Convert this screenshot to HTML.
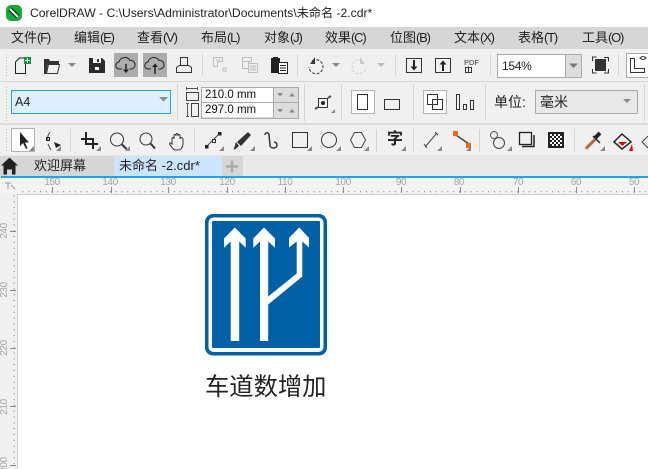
<!DOCTYPE html>
<html lang="zh"><head><meta charset="utf-8"><style>
html,body{margin:0;padding:0;background:#fff}
#p{position:relative;width:648px;height:469px;overflow:hidden;background:#f0f0f0;font-family:"Liberation Sans","Noto Sans CJK SC",sans-serif;color:#111}
.a{position:absolute;white-space:nowrap}
.m{top:28px;font-size:13px;line-height:20px;color:#222}
.m span{letter-spacing:-1.200px}
.r{top:177px;width:30px;text-align:center;font-size:10px;line-height:12px;letter-spacing:-.4px;color:#a5a5a5}
.v{left:-10px;width:30px;text-align:center;font-size:10px;line-height:12px;letter-spacing:-.4px;color:#a5a5a5;transform:rotate(-90deg)}
svg{position:absolute;left:0;top:0}
</style></head><body><div id="p">
<div class="a" style="left:0;top:0;width:648px;height:27px;background:#fff"></div>
<div class="a" style="left:0;top:27px;width:648px;height:22px;background:#d6d6d6"></div>
<div class="a" style="left:0;top:81px;width:648px;height:1px;background:#d6d6d6"></div>
<div class="a" style="left:0;top:123px;width:648px;height:2px;background:#dcdcdc"></div>
<div class="a" style="left:0;top:155px;width:648px;height:22px;background:#e8e8e8"></div>
<div class="a" style="left:0;top:156px;width:114px;height:20px;background:#d6d6d6"></div>
<div class="a" style="left:114px;top:156px;width:108px;height:20px;background:#cce4ff"></div>
<div class="a" style="left:222px;top:156px;width:21px;height:20px;background:#d6d6d6"></div>
<div class="a" style="left:1px;top:176px;width:647px;height:2px;background:#1ea4ee"></div>
<div class="a" style="left:0;top:178px;width:648px;height:16px;background:#f3f3f3"></div>
<div class="a" style="left:18px;top:195px;width:630px;height:274px;background:#fff"></div>
<div class="a" style="left:17px;top:194px;width:631px;height:1px;background:#cfcfcf"></div>
<div class="a" style="left:17px;top:194px;width:1px;height:275px;background:#cfcfcf"></div>

<div class="a" style="left:30px;top:5px;font-size:12.150px;line-height:17px;color:#222">CorelDRAW - C:\Users\Administrator\Documents\未命名 -2.cdr*</div>
<div class="a m" style="left:11px">文件<span>(F)</span></div><div class="a m" style="left:74px">编辑<span>(E)</span></div><div class="a m" style="left:137px">查看<span>(V)</span></div><div class="a m" style="left:201px">布局<span>(L)</span></div><div class="a m" style="left:264px">对象<span>(J)</span></div><div class="a m" style="left:325px">效果<span>(C)</span></div><div class="a m" style="left:390px">位图<span>(B)</span></div><div class="a m" style="left:454px">文本<span>(X)</span></div><div class="a m" style="left:518px">表格<span>(T)</span></div><div class="a m" style="left:582px">工具<span>(O)</span></div>

<div class="a" style="left:497px;top:54px;width:67px;height:22px;background:#fff;border:1px solid #aaa;font-size:12px;line-height:22px;text-indent:4px;letter-spacing:-.3px;color:#222">154%</div>
<div class="a" style="left:565px;top:54px;width:17px;height:24px;background:#ddd;border:1px solid #aaa;box-sizing:border-box"></div>

<div class="a" style="left:11px;top:90px;width:158px;height:22px;background:#ddeeff;border:1px solid #1ea4ee;font-size:12.500px;line-height:22px;text-indent:3px;color:#222">A4</div>
<div class="a" style="left:201px;top:87px;width:96px;height:30px;background:#ddd;border:1px solid #aaa"></div>
<div class="a" style="left:202px;top:88px;width:71px;height:14px;background:#fff;font-size:11.500px;line-height:15px;text-indent:3px;color:#111">210.0 mm</div>
<div class="a" style="left:202px;top:103px;width:71px;height:14px;background:#fff;font-size:11.500px;line-height:15px;text-indent:3px;color:#111">297.0 mm</div>
<div class="a" style="left:201px;top:102px;width:97px;height:1px;background:#aaa"></div>
<div class="a" style="left:273px;top:87px;width:1px;height:31px;background:#aaa"></div>
<div class="a" style="left:351px;top:90px;width:22px;height:22px;background:#fff;border:1px solid #b4b4b4"></div>
<div class="a" style="left:423px;top:90px;width:22px;height:22px;background:#fff;border:1px solid #b4b4b4"></div>
<div class="a" style="left:494px;top:92px;font-size:14px;line-height:20px;color:#222">单位:</div>
<div class="a" style="left:535px;top:90px;width:101px;height:22px;background:#e8e8e8;border:1px solid #aaa;font-size:14px;line-height:22px;text-indent:4px;color:#222">毫米</div>
<div class="a" style="left:11px;top:128px;width:22px;height:22px;background:#fff;border:1px solid #b4b4b4"></div>
<div class="a" style="left:387px;top:130px;font-size:16px;font-weight:700;line-height:20px;color:#222">字</div>

<div class="a" style="left:34px;top:156px;font-size:13px;line-height:20px;color:#222">欢迎屏幕</div>
<div class="a" style="left:119px;top:156px;font-size:13px;line-height:20px;color:#222">未命名 -2.cdr*</div>

<div class="a r" style="left:37px">150</div><div class="a r" style="left:95px">140</div><div class="a r" style="left:153px">130</div><div class="a r" style="left:212px">120</div><div class="a r" style="left:270px">110</div><div class="a r" style="left:328px">100</div><div class="a r" style="left:386px">90</div><div class="a r" style="left:444px">80</div><div class="a r" style="left:503px">70</div><div class="a r" style="left:561px">60</div><div class="a r" style="left:619px">50</div>
<div class="a v" style="top:225px">240</div><div class="a v" style="top:284px">230</div><div class="a v" style="top:342px">220</div><div class="a v" style="top:401px">210</div><div class="a v" style="top:459px">200</div>

<svg width="648" height="469" viewBox="0 0 648 469" fill="none">
<defs>
<pattern id="dh" width="5.82" height="16" x="5" y="3" patternUnits="userSpaceOnUse"><rect width="1" height="1.300" y="12" fill="#8a8a8a"/></pattern>
<pattern id="dv" width="16" height="5.82" y="3.300" patternUnits="userSpaceOnUse"><rect x="13.600" width="1.300" height="1" fill="#8a8a8a"/></pattern>
<pattern id="gr" width="3" height="3" patternUnits="userSpaceOnUse"><rect width="1" height="1" fill="#bbb"/></pattern>
</defs>
<rect x="18" y="178" width="630" height="16" fill="url(#dh)"/>
<g fill="#8a8a8a"><rect x="52" y="187" width="1" height="6"/><rect x="111" y="187" width="1" height="6"/><rect x="168" y="187" width="1" height="6"/><rect x="227" y="187" width="1" height="6"/><rect x="285" y="187" width="1" height="6"/><rect x="343" y="187" width="1" height="6"/><rect x="401" y="187" width="1" height="6"/><rect x="460" y="187" width="1" height="6"/><rect x="518" y="187" width="1" height="6"/><rect x="576" y="187" width="1" height="6"/><rect x="634" y="187" width="1" height="6"/>
<rect x="10" y="231" width="6" height="1"/><rect x="10" y="290" width="6" height="1"/><rect x="10" y="348" width="6" height="1"/><rect x="10" y="406" width="6" height="1"/><rect x="10" y="465" width="6" height="1"/></g>
<rect x="0" y="195" width="17" height="274" fill="url(#dv)"/>
<rect x="4" y="52" width="4" height="26" fill="url(#gr)"/><rect x="4" y="85" width="4" height="36" fill="url(#gr)"/><rect x="4" y="127" width="4" height="26" fill="url(#gr)"/>

<!-- logo -->
<rect x="6" y="5" width="16" height="16" rx="5" fill="#13a838"/><path d="M10 9l8 8" stroke="#17401f" stroke-width="5"/><path d="M10 9l8 8" stroke="#e8f5e8" stroke-width="2"/>

<!-- separators -->
<g fill="#d4d4d4"><rect x="202" y="54" width="1" height="22"/><rect x="297" y="54" width="1" height="22"/><rect x="395" y="54" width="1" height="22"/><rect x="490" y="54" width="1" height="22"/><rect x="618" y="54" width="1" height="22"/>
<rect x="177" y="84" width="1" height="37"/><rect x="304" y="84" width="1" height="37"/><rect x="341" y="84" width="1" height="37"/><rect x="413" y="84" width="1" height="37"/><rect x="485" y="84" width="1" height="37"/><rect x="644" y="84" width="1" height="37"/>
<rect x="70" y="129" width="1" height="23"/><rect x="194" y="129" width="1" height="23"/><rect x="376" y="129" width="1" height="23"/><rect x="413" y="129" width="1" height="23"/><rect x="479" y="129" width="1" height="23"/><rect x="574" y="129" width="1" height="23"/></g>

<!-- row1 -->
<path d="M15.500 73.500V62l4-4h6v15.500z" stroke="#222"/><rect x="24" y="57" width="7" height="7" fill="#0a9a3c"/><path d="M27.500 58v5M25 60.500h5" stroke="#fff"/>
<path d="M44 74V59h5l1 2h9v3H48l-2 10z" fill="#333"/><path d="M46.500 73.500l2-9h11l-2 9z" stroke="#333"/>
<path d="M68 63h8l-4 4z" fill="#8a8a8a"/>
<path d="M89 58h13l3 3v12H89z" fill="#2a2a2a"/><rect x="93" y="58" width="8" height="5" fill="#fff"/><rect x="97" y="59" width="2" height="3" fill="#2a2a2a"/><rect x="95" y="67" width="4" height="3" fill="#fff"/>
<rect x="114" y="53" width="24" height="24" fill="#acacac"/><rect x="143" y="53" width="24" height="24" fill="#acacac"/>
<path d="M122 69h-2.500a3.500 3.500 0 0 1 -.5-7 6 6 0 0 1 11-1.500 4 4 0 0 1 1.500 8.500h-2" stroke="#222"/><path d="M126 64v7" stroke="#222" stroke-width="1.500"/><path d="M123 69.500h6l-3 3.500z" fill="#222"/>
<path d="M151 69h-2.500a3.500 3.500 0 0 1 -.5-7 6 6 0 0 1 11-1.500 4 4 0 0 1 1.500 8.500h-2" stroke="#222"/><path d="M155 66v8" stroke="#222" stroke-width="1.500"/><path d="M152 67h6l-3-3.500z" fill="#222"/>
<path d="M180.500 65.500V57.500h7v8M176.500 72.500v-5l3-2h9l3 2v5z" stroke="#333"/>
<g stroke="#bdbdbd"><path d="M213.500 57.500h9v4h-5v5h-4zM223 68h3v3h-3zM216 60h4"/><path d="M242.500 57.500h9v4h-9zM242.500 61.500h6v7h-6zM248.500 63.500h9v9h-9zM250 66h6M250 68h6M250 70h6"/></g>
<path d="M271 58h9v15h-9z" fill="#222"/><path d="M273 57h5v2h-5z" fill="#222"/><rect x="278.500" y="62.500" width="9" height="11" fill="#fff" stroke="#222"/><path d="M280 65.500h6M280 68h6M280 70.500h6" stroke="#222"/>
<path d="M312 61a7 7 0 1 1-3 6" stroke="#333" stroke-dasharray="3 1.500"/><path d="M315 57v7h-5z" fill="#333"/>
<path d="M332 63h8l-4 4z" fill="#8a8a8a"/>
<path d="M363 61a7 7 0 1 0 3 6" stroke="#ccc" stroke-dasharray="3 1.500"/><path d="M360 57v7h5z" fill="#ccc"/>
<path d="M377 63h8l-4 4z" fill="#bbb"/>
<rect x="406.500" y="58.500" width="15" height="14" stroke="#333"/><path d="M414 60v8" stroke="#222" stroke-width="2"/><path d="M410.500 66.500h7l-3.500 4z" fill="#222"/>
<rect x="435.500" y="58.500" width="15" height="14" stroke="#333"/><path d="M443 63v8" stroke="#222" stroke-width="2"/><path d="M439.500 64.500h7l-3.500-4z" fill="#222"/>
<text x="464" y="65" font-family="Liberation Sans" font-size="7.500" fill="#333">PDF</text><rect x="465.500" y="67.500" width="6" height="5" stroke="#333"/><path d="M468.500 66.500v6" stroke="#333"/>
<path d="M569 63.500h9l-4.500 4.500z" fill="#777"/>
<rect x="595" y="59" width="11" height="12" fill="#333"/><path d="M592.500 61v-4h4M604 57.500h4.500v4M608.500 69v4H604M596.500 73h-4v-4" stroke="#333"/>
<rect x="626.500" y="53.500" width="22" height="24" fill="#fff" stroke="#aaa"/><path d="M630.500 58.500v14h14v-4h-10v-10z" stroke="#333"/><path d="M640 58c2-2 4-2 6 0-2 2-4 2-6 0z" stroke="#333" fill="#fff"/>

<!-- row2 -->
<path d="M159 97h9l-4.500 4.500z" fill="#8a8a8a"/>
<path d="M186 88.500h12M186.500 87v3M197.500 87v3" stroke="#555"/><rect x="186.500" y="92.500" width="12" height="8" stroke="#444"/>
<path d="M186 103.500h3M186 116.500h3M187.500 103v14" stroke="#555"/><rect x="191.500" y="103.500" width="7" height="13" stroke="#444"/>
<g fill="#888"><path d="M277 93h6l-3 3.500zM277 109h6l-3 3.500z"/><path d="M289 96.500h6l-3-3.500zM289 112.500h6l-3-3.500z"/></g>
<rect x="318.500" y="98.500" width="9" height="9" stroke="#333"/><circle cx="323" cy="103" r="2" fill="#222"/><path d="M315 109l3-2M328 98l3-2" stroke="#555" stroke-width="2"/><path d="M335 113v-4l-4 4z" fill="#888"/>
<rect x="357.500" y="94.500" width="10" height="15" stroke="#333"/><rect x="384.500" y="99.500" width="15" height="10" stroke="#333"/>
<rect x="427.500" y="94.500" width="10" height="10" fill="#fff" stroke="#333"/><rect x="432.500" y="99.500" width="10" height="10" fill="none" stroke="#333"/>
<rect x="456.500" y="94.500" width="3" height="15" stroke="#333"/><rect x="463.500" y="104.500" width="3" height="5" stroke="#333"/><rect x="470.500" y="100.500" width="3" height="9" stroke="#333"/>
<path d="M623 99h8l-4 4z" fill="#8a8a8a"/>

<!-- row3 -->
<path d="M20 132v14l3-3 3 6 1.500-.7-2.500-5.800h4z" fill="#222"/><g fill="#888"><path d="M34 151v-5l-5 5z"/><path d="M61 151v-5l-5 5z"/><path d="M101 151v-5l-5 5z"/><path d="M130 151v-5l-5 5z"/><path d="M224 151v-5l-5 5z"/><path d="M255 151v-5l-5 5z"/><path d="M312 151v-5l-5 5z"/><path d="M341 151v-5l-5 5z"/><path d="M369 151v-5l-5 5z"/><path d="M406 151v-5l-5 5z"/><path d="M442 151v-5l-5 5z"/><path d="M471 151v-5l-5 5z"/><path d="M512 151v-5l-5 5z"/><path d="M605 151v-5l-5 5z"/></g>
<path d="M50 132c-2 3-3 5-2 8M48 144c1 3 2 4 3 6" stroke="#444"/><rect x="46.500" y="137.500" width="3" height="3" stroke="#222"/><path d="M54 142l7 3-5 3z" fill="#222"/>
<path d="M81 139h12v10M86 132v12h12" stroke="#222" stroke-width="2"/>
<circle cx="117" cy="139.500" r="6.500" stroke="#333"/><path d="M122 144.500l4.500 4.500" stroke="#333" stroke-width="2"/>
<circle cx="146" cy="139" r="6" stroke="#333"/><path d="M150.500 143.500l4.500 5" stroke="#333" stroke-width="2"/>
<path d="M172 144v-5c0-2 2-2 2 0v-3c0-2 2-2 2 0v-1c0-2 2-2 2 0v1c0-2 2-2 2 0v3c0-2 2-2 3 0v5c0 3-2 6-5 6h-2c-3 0-4-3-6-5-1-2 0-3 2-1z" stroke="#333"/>
<path d="M206 147l14-14" stroke="#444"/><rect x="205" y="145" width="3.500" height="3.500" fill="#222"/><rect x="212.500" y="139.500" width="3" height="3" fill="#fff" stroke="#333"/><rect x="218" y="132" width="3.500" height="3.500" fill="#222"/>
<path d="M236 142l3 4-4 3.500-1.500-.5c1-1 1.500-4 2.500-7z" fill="#333"/><path d="M237 142l11-10 3 3-10 11z" fill="#333"/>
<path d="M265 135c0-3 4-3 4 0l1 10c0 4 7 4 7 0 0-2-2-3-3-3" stroke="#333" stroke-width="1.500"/>
<rect x="292.500" y="132.500" width="15" height="15" stroke="#333"/>
<circle cx="329" cy="140" r="7.500" stroke="#333"/>
<path d="M354.500 132.500h7l4 7.500-4 7.500h-7l-4-7.500z" stroke="#444"/>
<path d="M425 147l12-14M424 144l3 4M435 132l3 3" stroke="#444"/>
<path d="M456 135l13 9" stroke="#444" stroke-width="1.500"/><rect x="453" y="131" width="5" height="5" fill="#ee6a10"/><rect x="466" y="143" width="5" height="5" fill="#ee6a10"/>
<circle cx="494" cy="135" r="3.500" stroke="#555"/><circle cx="499" cy="143" r="5.500" fill="#f0f0f0" stroke="#444"/>
<rect x="519.500" y="132.500" width="12" height="12" stroke="#222" stroke-width="1.300"/><path d="M534 135v11.500h-12" stroke="#222" stroke-width="1.500"/>
<rect x="548" y="132" width="16" height="16" fill="#222"/><g fill="#fff"><rect x="550" y="134" width="2" height="2"/><rect x="554" y="134" width="2" height="2"/><rect x="558" y="134" width="2" height="2"/><rect x="552" y="136" width="2" height="2"/><rect x="556" y="136" width="2" height="2"/><rect x="560" y="136" width="2" height="2"/><rect x="550" y="138" width="2" height="2"/><rect x="554" y="138" width="2" height="2"/><rect x="558" y="138" width="2" height="2"/><rect x="552" y="140" width="2" height="2"/><rect x="556" y="140" width="2" height="2"/><rect x="560" y="140" width="2" height="2"/><rect x="550" y="142" width="2" height="2"/><rect x="554" y="142" width="2" height="2"/><rect x="558" y="142" width="2" height="2"/><rect x="552" y="144" width="2" height="2"/><rect x="556" y="144" width="2" height="2"/><rect x="560" y="144" width="2" height="2"/></g>
<path d="M586 148.500l9-9" stroke="#d9661a" stroke-width="2.500"/><path d="M585.500 149l10-10" stroke="#555" stroke-width="4" opacity=".25"/><path d="M595 138l5-5" stroke="#222" stroke-width="4"/><path d="M593 136l7 7" stroke="#222" stroke-width="1.500"/>
<path d="M622 134l9 8-9 7-8-7z" stroke="#222" stroke-width="1.500" fill="#fff"/><path d="M618 142h9l-4.500 4z" fill="#e8000b"/><path d="M629 151l3-7 1 7z" fill="#e8000b"/>
<path d="M648 136l-6 6 6 6" stroke="#444"/>

<!-- tabs -->
<path d="M9.500 157.500L1 165.500h2.500v9h3.500v-5h5v5h3.500v-9H18z" fill="#222"/>
<path d="M232 160.500v12M226 166.500h12" stroke="#aaa" stroke-width="2.500"/>

<!-- ruler corner -->
<path d="M5 183h6M8 183v6M11 185l4 4" stroke="#999"/>

<!-- sign -->
<rect x="205" y="214" width="122" height="141.500" rx="8" fill="#0060a6"/>
<rect x="208.500" y="217.500" width="115" height="134.500" rx="5" fill="#fff"/>
<rect x="212" y="221" width="108" height="127" rx="1" fill="#0060a6"/>
<path fill="#fff" d="M234.800 227.500L245.700 238.500V247.800L239.200 241.500V341H230.700V241.500L224 247.800V238.500zM264 227.500L275 238.500V247.800L268.200 241.500V296.500L296.700 273.500V241.500L289 247.500V238L299.300 227.500 309 238V247.500L302.300 241.500V276.500L268.200 304.500V341H260V241.500L253.300 247.800V238.500z"/>

<text x="205" y="395" font-family="Noto Sans CJK SC" font-size="24.300" fill="#222">车道数增加</text>
</svg>
</div></body></html>
